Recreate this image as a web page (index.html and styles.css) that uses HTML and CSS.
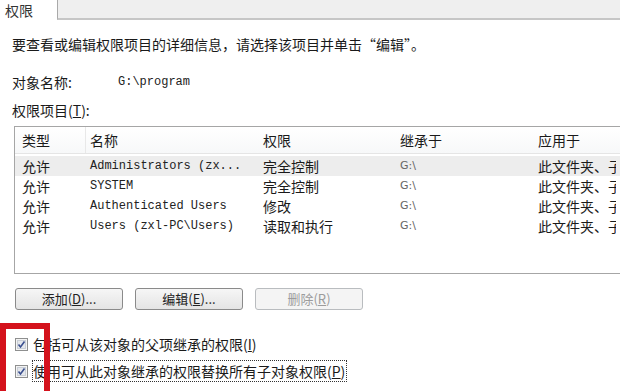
FILE: index.html
```html
<!doctype html>
<html>
<head>
<meta charset="utf-8">
<title>高级安全设置</title>
<link rel="stylesheet" href="styles.css">
</head>
<body>
<div class="tabs">
	<div class="tab_on">权限</div>
	<div class="tab_rest"></div>
</div>

<div class="main">
	<p class="intro">要查看或编辑权限项目的详细信息，请选择该项目并单击“编辑”。</p>
	<div class="obj">
		<span class="obj_label">对象名称:</span>
		<span class="mono">G:\program</span>
	</div>
	<div class="items_label">权限项目(<u>T</u>):</div>

	<div class="list">
		<div class="row head">
			<div>类型</div>
			<div>名称</div>
			<div>权限</div>
			<div>继承于</div>
			<div>应用于</div>
		</div>
		<div class="row sel">
			<div>允许</div>
			<div class="mono">Administrators (zx...</div>
			<div>完全控制</div>
			<div class="from">G:\</div>
			<div class="apply">此文件夹、子文件夹和文件</div>
		</div>
		<div class="row">
			<div>允许</div>
			<div class="mono">SYSTEM</div>
			<div>完全控制</div>
			<div class="from">G:\</div>
			<div class="apply">此文件夹、子文件夹和文件</div>
		</div>
		<div class="row">
			<div>允许</div>
			<div class="mono">Authenticated Users</div>
			<div>修改</div>
			<div class="from">G:\</div>
			<div class="apply">此文件夹、子文件夹和文件</div>
		</div>
		<div class="row">
			<div>允许</div>
			<div class="mono">Users (zxl-PC\Users)</div>
			<div>读取和执行</div>
			<div class="from">G:\</div>
			<div class="apply">此文件夹、子文件夹和文件</div>
		</div>
	</div>

	<div class="btns">
		<button class="btn">添加(<u>D</u>)...</button>
		<button class="btn">编辑(<u>E</u>)...</button>
		<button class="btn" disabled>删除(<u>R</u>)</button>
	</div>

	<label class="chk">
		<svg class="box" width="13" height="13" viewBox="0 0 13 13"><rect x="0.5" y="0.5" width="12" height="12" fill="#f4f4f4" stroke="#8e8f8f"/><rect x="2.5" y="2.5" width="8" height="8" fill="#e4e7ec" stroke="#c9ced6"/><path d="M3.5 6.5 L5.5 9 L9.5 3.5" fill="none" stroke="#3a4f8f" stroke-width="1.6"/></svg>
		<span>包括可从该对象的父项继承的权限(<u>I</u>)</span>
	</label>
	<label class="chk">
		<svg class="box" width="13" height="13" viewBox="0 0 13 13"><rect x="0.5" y="0.5" width="12" height="12" fill="#f4f4f4" stroke="#8e8f8f"/><rect x="2.5" y="2.5" width="8" height="8" fill="#e4e7ec" stroke="#c9ced6"/><path d="M3.5 6.5 L5.5 9 L9.5 3.5" fill="none" stroke="#3a4f8f" stroke-width="1.6"/></svg>
		<span class="focus">使用可从此对象继承的权限替换所有子对象权限(<u>P</u>)</span>
	</label>
</div>

<div class="mark"></div>
</body>
</html>
```

FILE: styles.css
```css
*{margin:0;padding:0}
html{ height:391px; overflow:hidden;}
body{ background:#fff; color:#1a1a1a; font:14px/20px "Noto Sans CJK SC","Liberation Sans",sans-serif; overflow:hidden; width:620px; height:391px; position:relative;}
u{ text-decoration:underline;}

.tabs{ display:flex; height:20px;}
.tabs .tab_on{ width:57px; padding-left:5px; box-sizing:border-box; line-height:20px; color:#333;}
.tabs .tab_rest{ flex:1; background:#efefef; border-left:1px solid #a9a9a9; border-bottom:2px solid #c6c6c6; height:18px;}

.main{ padding-left:12px;}
.intro{ margin-top:14px;}
.obj{ display:flex; margin-top:18px;}
.obj .obj_label{ width:106px;}
.mono{ font-family:"Liberation Mono","DejaVu Sans Mono",monospace; font-size:12px; color:#222;}
.items_label{ margin-top:8px;}

.list{ margin:6px -30px 0 2px; height:148px; border:1px solid #a6a6a6; border-right:none; box-sizing:border-box; overflow:hidden;}
.list .row{ display:grid; grid-template-columns:71px 173px 137px 138px 1fr; height:20px; line-height:20px; white-space:nowrap;}
.list .row div{ padding-left:4px; overflow:hidden;}
.list .row div:first-child{ padding-left:7px;}
.list .head{ height:26px; line-height:26px; margin-bottom:2px; background:linear-gradient(#fff,#f7f8f9); border-bottom:1px solid #e5e5e5;}
.list .head div:first-child{ border-right:1px solid #e8e8e8;}
.list .sel{ background:#ededed;}
.list .from{ font-family:"DejaVu Sans","Liberation Sans",sans-serif; font-size:11px; color:#666;}
.list .apply{ max-width:78px;}

.btns{ display:flex; gap:12px; margin:14px 0 0 3px;}
.btn{ width:108px; height:22px; border:1px solid #8a8a8a; border-radius:3px; background:linear-gradient(#f6f6f6,#e4e4e4); font:13px/20px "Noto Sans CJK SC",sans-serif; color:#222;}
.btn:disabled{ border-color:#b9bcbf; background:#f4f4f4; color:#9c9c9c;}

.chk{ display:flex; align-items:center; height:24px; margin-left:3px;}
.chk:first-of-type{ margin-top:22px;}
.chk + .chk{ margin-top:3px;}
.chk .box{ flex:none; margin-right:5px;}
.chk .focus{ outline:1px dotted #333; outline-offset:0; padding-right:1px;}

.mark{ position:absolute; left:0; top:323px; width:38px; bottom:-8px; border:6px solid #d4121c;}
```
